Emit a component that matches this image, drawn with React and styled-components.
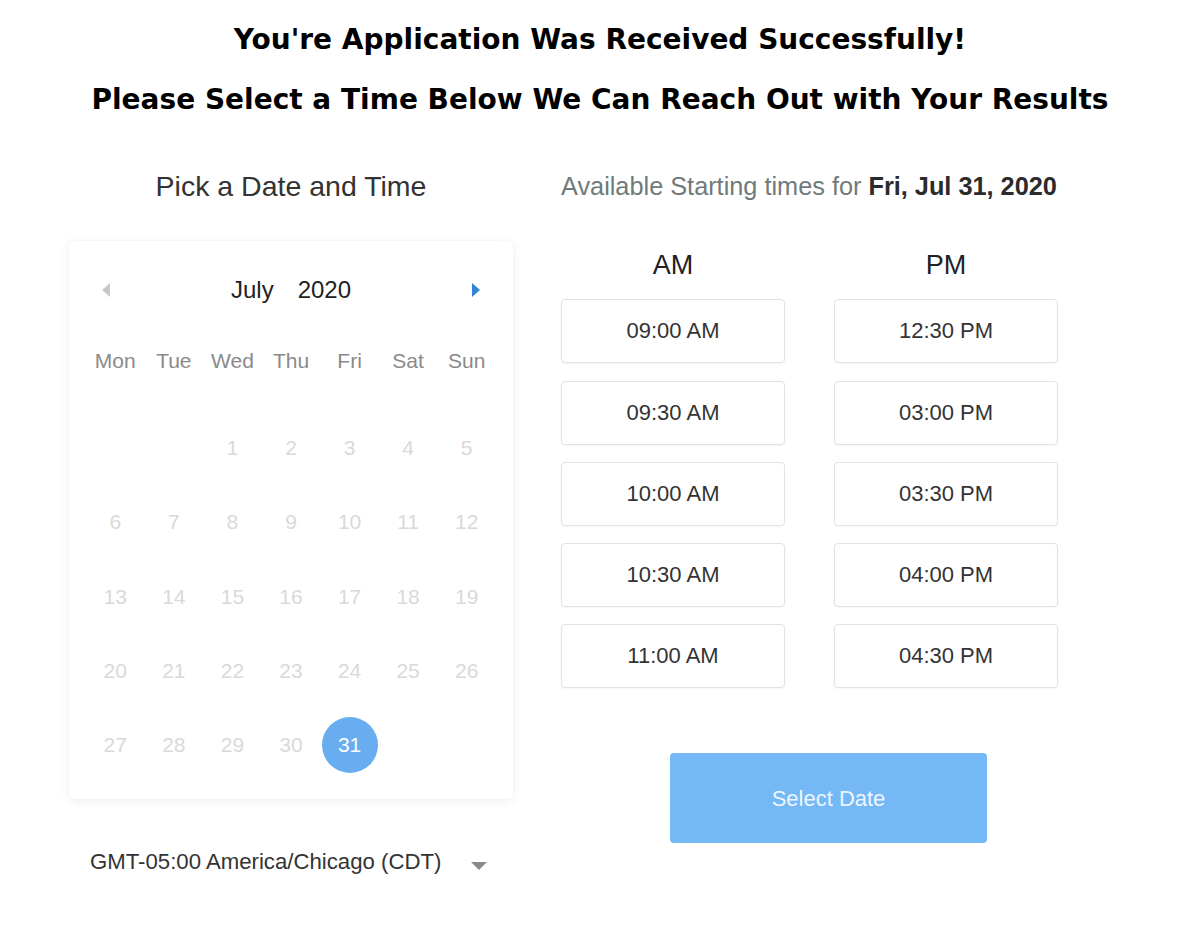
import React from "react";
import styled, { createGlobalStyle } from "styled-components";

const Global = createGlobalStyle`
  html, body { margin: 0; padding: 0; background: #fff; }
  body { font-family: "Liberation Sans", Arial, sans-serif; }
`;

const Page = styled.div`
  width: 1200px;
  height: 940px;
  background: #fff;
  overflow: hidden;
`;

const Header = styled.header`
  display: flex;
  flex-direction: column;
  align-items: center;
  padding-top: 21px;
  gap: 22px;
`;

const Title = styled.h1`
  margin: 0;
  font-family: "DejaVu Sans", "Open Sans", sans-serif;
  font-weight: 700;
  font-size: 28px;
  line-height: 38px;
  color: #000;
  letter-spacing: 0;
  white-space: nowrap;
`;

const Main = styled.main`
  display: flex;
  gap: 48px;
  padding-left: 69px;
  margin-top: 47px;
`;

const LeftCol = styled.section`
  width: 444px;
  display: flex;
  flex-direction: column;
`;

const RightCol = styled.section`
  width: 497px;
  display: flex;
  flex-direction: column;
`;

const PickTitle = styled.h2`
  margin: 0;
  text-align: center;
  font-weight: 400;
  font-size: 28.5px;
  line-height: 40px;
  color: #333;
`;

const AvailTitle = styled.h2`
  margin: 0;
  font-weight: 400;
  font-size: 25.3px;
  line-height: 40px;
  color: #6f7a7a;
  white-space: nowrap;
  b { color: #2b2b2b; font-weight: 700; }
`;

const Card = styled.div`
  margin-top: 35px;
  background: #fff;
  border-radius: 6px;
  box-shadow: 0 2px 12px rgba(0, 0, 0, 0.07), 0 0 2px rgba(0, 0, 0, 0.03);
  padding: 29px 17px 17px;
`;

const CalHeader = styled.div`
  height: 40px;
  display: flex;
  align-items: center;
  justify-content: space-between;
  padding: 0 16px;
`;

const MonthLabel = styled.div`
  display: flex;
  gap: 24px;
  font-size: 24px;
  color: #222;
`;

const Arrow = styled.span`
  width: 0;
  height: 0;
  border-top: 7px solid transparent;
  border-bottom: 7px solid transparent;
  ${(p) =>
    p.$dir === "left"
      ? `border-right: 8px solid ${p.$color};`
      : `border-left: 8px solid ${p.$color};`}
`;

const Grid = styled.div`
  display: grid;
  grid-template-columns: repeat(7, 1fr);
`;

const WeekRow = styled(Grid)`
  margin-top: 36px;
  height: 30px;
  align-items: center;
`;

const WeekDay = styled.div`
  text-align: center;
  font-size: 21px;
  color: #8a8a8a;
`;

const DaysGrid = styled(Grid)`
  margin-top: 35px;
  grid-auto-rows: 74.25px;
  align-items: center;
  justify-items: center;
`;

const Day = styled.div`
  width: 56px;
  height: 56px;
  border-radius: 50%;
  display: flex;
  align-items: center;
  justify-content: center;
  font-size: 21px;
  color: ${(p) => (p.$selected ? "#fff" : "#d9d9d9")};
  background: ${(p) => (p.$selected ? "#68adf0" : "transparent")};
  grid-column: ${(p) => p.$col || "auto"};
`;

const TzRow = styled.div`
  margin-top: 50px;
  display: flex;
  align-items: center;
  padding-left: 21px;
  padding-right: 26px;
  justify-content: space-between;
  font-size: 22.2px;
  color: #333;
`;

const TzCaret = styled.span`
  width: 0;
  height: 0;
  border-left: 8px solid transparent;
  border-right: 8px solid transparent;
  border-top: 8px solid #8a8a8a;
  margin-top: 8px;
`;

const Slots = styled.div`
  margin-top: 44px;
  display: grid;
  grid-template-columns: 224px 224px;
  column-gap: 49px;
`;

const SlotColumn = styled.div`
  display: flex;
  flex-direction: column;
  gap: 17.25px;
`;

const Period = styled.div`
  text-align: center;
  font-size: 27px;
  line-height: 30px;
  color: #222;
  margin-bottom: 2px;
`;

const Slot = styled.button`
  height: 64px;
  border: 1px solid #e2e2e2;
  border-radius: 4px;
  background: #fff;
  font-family: "Liberation Sans", Arial, sans-serif;
  font-size: 22px;
  color: #333;
  box-shadow: 0 1px 2px rgba(0, 0, 0, 0.04);
  padding: 0;
`;

const SelectBtn = styled.button`
  margin-top: 65px;
  margin-left: 109px;
  width: 317px;
  height: 90px;
  border: none;
  border-radius: 4px;
  background: #74b8f5;
  color: #eef6ff;
  font-family: "Liberation Sans", Arial, sans-serif;
  font-size: 22px;
  padding-top: 2px;
`;

const weekdays = ["Mon", "Tue", "Wed", "Thu", "Fri", "Sat", "Sun"];
const am = ["09:00 AM", "09:30 AM", "10:00 AM", "10:30 AM", "11:00 AM"];
const pm = ["12:30 PM", "03:00 PM", "03:30 PM", "04:00 PM", "04:30 PM"];

export default function App() {
  const days = Array.from({ length: 31 }, (_, i) => i + 1);
  return (
    <Page>
      <Global />
      <Header>
        <Title>You're Application Was Received Successfully!</Title>
        <Title>Please Select a Time Below We Can Reach Out with Your Results</Title>
      </Header>
      <Main>
        <LeftCol>
          <PickTitle>Pick a Date and Time</PickTitle>
          <Card>
            <CalHeader>
              <Arrow $dir="left" $color="#c8c8c8" />
              <MonthLabel>
                <span>July</span>
                <span>2020</span>
              </MonthLabel>
              <Arrow $dir="right" $color="#2f86d6" />
            </CalHeader>
            <WeekRow>
              {weekdays.map((d) => (
                <WeekDay key={d}>{d}</WeekDay>
              ))}
            </WeekRow>
            <DaysGrid>
              {days.map((d) => (
                <Day key={d} $col={d === 1 ? 3 : undefined} $selected={d === 31}>
                  {d}
                </Day>
              ))}
            </DaysGrid>
          </Card>
          <TzRow>
            <span>GMT-05:00 America/Chicago (CDT)</span>
            <TzCaret />
          </TzRow>
        </LeftCol>
        <RightCol>
          <AvailTitle>
            Available Starting times for <b>Fri, Jul 31, 2020</b>
          </AvailTitle>
          <Slots>
            <SlotColumn>
              <Period>AM</Period>
              {am.map((t) => (
                <Slot key={t}>{t}</Slot>
              ))}
            </SlotColumn>
            <SlotColumn>
              <Period>PM</Period>
              {pm.map((t) => (
                <Slot key={t}>{t}</Slot>
              ))}
            </SlotColumn>
          </Slots>
          <SelectBtn>Select Date</SelectBtn>
        </RightCol>
      </Main>
    </Page>
  );
}
